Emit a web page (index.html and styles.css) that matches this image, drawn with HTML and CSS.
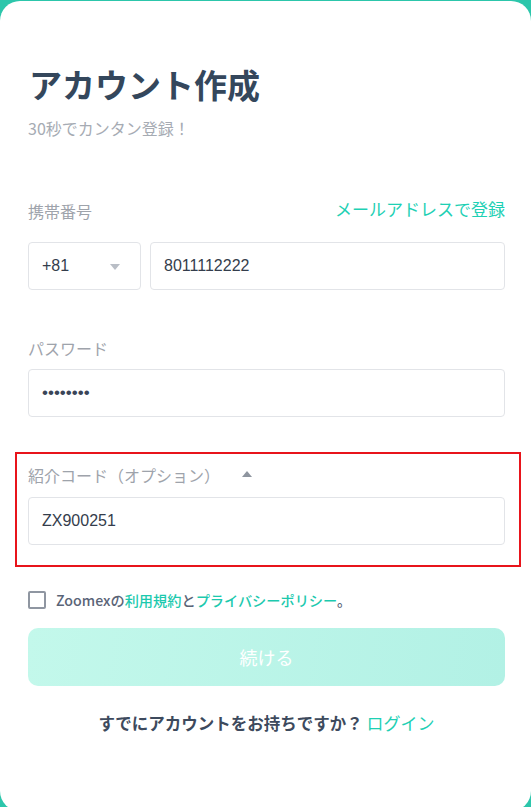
FILE: index.html
```html
<!DOCTYPE html>
<html lang="ja">
<head>
<meta charset="utf-8">
<title>アカウント作成</title>
<link rel="stylesheet" href="styles.css">
</head>
<body>
<div class="card">
  <h1 class="title">アカウント作成</h1>
  <p class="subtitle">30秒でカンタン登録！</p>

  <div class="field-head phone-head">
    <span class="label">携帯番号</span>
    <a class="switch-link">メールアドレスで登録</a>
  </div>
  <div class="phone-row">
    <div class="box country">
      <span class="val">+81</span>
      <svg class="caret" width="10" height="6" viewBox="0 0 10 6"><path d="M0 0H10L5 6Z" fill="#b9bec6"/></svg>
    </div>
    <div class="box phone"><span class="val">8011112222</span></div>
  </div>

  <div class="field-head pw-head">
    <span class="label">パスワード</span>
  </div>
  <div class="box full"><span class="dots">••••••••</span></div>

  <div class="ref-section">
    <div class="ref-head">
      <span class="label">紹介コード（オプション）</span>
      <svg class="caret-up" width="10" height="6" viewBox="0 0 10 6"><path d="M0 6H10L5 0Z" fill="#8e959f"/></svg>
    </div>
    <div class="box full"><span class="val">ZX900251</span></div>
  </div>

  <div class="agree">
    <span class="checkbox"></span>
    <span class="agree-text">Zoomexの<a class="tlink">利用規約</a>と<a class="tlink">プライバシーポリシー</a>。</span>
  </div>

  <button class="submit">続ける</button>

  <p class="login">すでにアカウントをお持ちですか？ <a class="login-link">ログイン</a></p>
</div>
</body>
</html>
```
FILE: styles.css
```css
* { box-sizing: border-box; }
html, body { margin: 0; padding: 0; }
body {
  background: #2cc6ab;
  font-family: "Noto Sans CJK JP", "Noto Sans", sans-serif;
  overflow: hidden;
  height: 807px;
}
.card {
  margin-top: 1px;
  height: 810px;
  background: #fff;
  border-radius: 20px;
  padding: 63px 26px 0 28px;
  display: flex;
  flex-direction: column;
}
.title {
  margin: 0 0 0 1px;
  font-size: 33px;
  line-height: 40px;
  font-weight: 700;
  color: #34475c;
}
.subtitle {
  margin: 12px 0 0;
  font-size: 16px;
  line-height: 24px;
  color: #a6abb3;
}
.field-head {
  display: flex;
  justify-content: space-between;
  align-items: center;
  height: 24px;
}
.phone-head { margin-top: 59px; }
.pw-head { margin-top: 46px; }
.label {
  font-size: 16px;
  line-height: 24px;
  color: #9ea3ab;
}
.switch-link {
  font-size: 17px;
  line-height: 24px;
  color: #1ed0b4;
  margin-top: -4px;
}
.phone-row {
  display: flex;
  gap: 9px;
  margin-top: 19px;
}
.box {
  height: 48px;
  border: 1px solid #e2e4e8;
  border-radius: 4px;
  display: flex;
  align-items: center;
  padding: 0 13px;
  background: #fff;
}
.country {
  width: 113px;
  justify-content: space-between;
  padding-right: 20px;
}
.phone { flex: 1; }
.val {
  font-family: "Liberation Sans", Arial, sans-serif;
  font-size: 16px;
  color: #343d4c;
}
.caret { margin-top: 1px; }
.pw-head + .box { margin-top: 9px; }
.dots {
  font-family: "Liberation Sans", Arial, sans-serif;
  font-size: 17px;
  color: #3a4558;
}
.ref-section {
  margin: 35px -16px 0 -13px;
  border: 2px solid #e8141b;
  padding: 9px 14px 20px 11px;
}
.ref-head {
  display: flex;
  align-items: center;
  gap: 22px;
  height: 24px;
}
.caret-up { margin-top: -3px; }
.ref-head + .box { margin-top: 10px; }
.agree {
  display: flex;
  align-items: center;
  gap: 10px;
  margin-top: 22px;
  height: 22px;
}
.checkbox {
  width: 18px;
  height: 18px;
  border: 2px solid #8f96a1;
  border-radius: 2px;
  flex: none;
}
.agree-text {
  font-size: 14.2px;
  line-height: 22px;
  font-weight: 500;
  color: #5a6477;
}
.tlink { color: #1cc9ae; }
.submit {
  margin-top: 17px;
  height: 58px;
  border: 0;
  border-radius: 10px;
  background: linear-gradient(100deg, #c3f8eb 0%, #b2f1e5 100%);
  color: #fff;
  font-family: "Noto Sans CJK JP", "Noto Sans", sans-serif;
  font-size: 18px;
  width: 100%;
}
.login {
  margin: 25px 0 0;
  text-align: center;
  font-size: 16.5px;
  line-height: 24px;
  font-weight: 700;
  color: #3d4a5d;
}
.login-link {
  font-weight: 400;
  font-size: 17px;
  color: #1ed0b4;
}
```
